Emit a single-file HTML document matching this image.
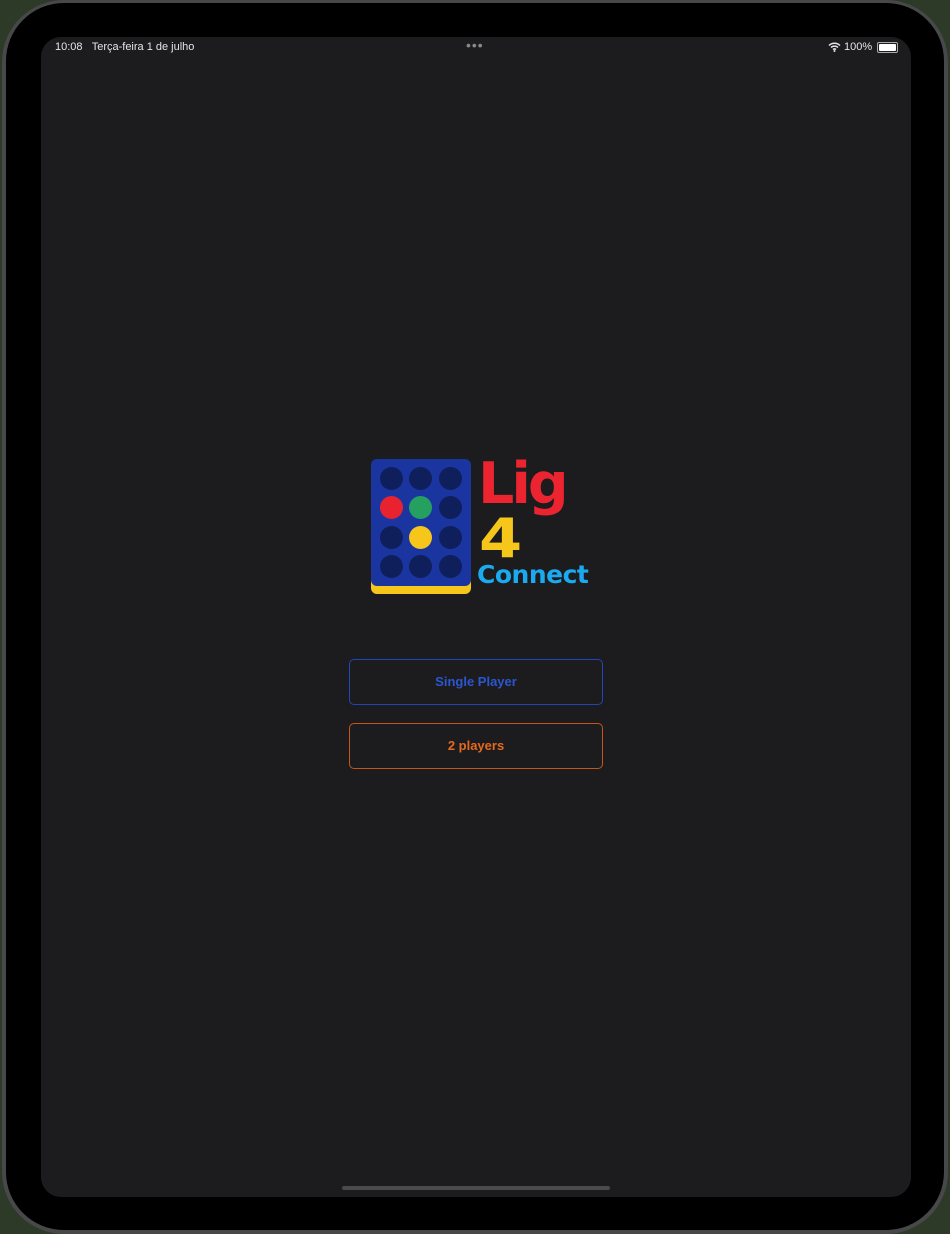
<!DOCTYPE html>
<html><head><meta charset="utf-8"><style>
body{margin:0;width:950px;height:1234px;background:#2d3a28;overflow:hidden;font-family:"Liberation Sans",sans-serif;position:relative}
.frame{position:absolute;left:2px;top:0;width:946px;height:1234px;border-radius:62px;background:#48484a}
.bezel{position:absolute;left:6px;top:3px;width:938px;height:1227px;border-radius:58px;background:#000}
.screen{position:absolute;left:41px;top:37px;width:870px;height:1160px;border-radius:20px;background:#1c1c1e}
.st{position:absolute;top:41px;font-size:11px;color:#e5e5e7}
.btn{position:absolute;left:349px;width:252px;height:44px;border:1px solid;border-radius:5px;box-sizing:content-box;text-align:center;line-height:44px;font-size:13px;font-weight:bold}
.c{position:absolute;width:23px;height:23px;border-radius:50%;background:#0f1f5c}
.t{position:absolute;font-weight:bold;font-family:"DejaVu Sans","Liberation Sans",sans-serif}
</style></head><body>
<div class="frame"></div><div class="bezel"></div>
<div class="screen"></div>
<div class="st" style="left:55px">10:08&nbsp;&nbsp;&nbsp;Terça-feira 1 de julho</div>
<div class="st" style="left:466px;top:37px;font-size:14px;letter-spacing:1px;color:#888">•••</div>
<svg style="position:absolute;left:828px;top:42px" width="13" height="10" viewBox="0 0 13 10"><path d="M1 3.5A8 8 0 0 1 12 3.5M3 5.5A5 5 0 0 1 10 5.5M5 7.5A2.5 2.5 0 0 1 8 7.5" stroke="#e5e5e7" stroke-width="1.5" fill="none"/><circle cx="6.5" cy="9" r="1" fill="#e5e5e7"/></svg>
<div class="st" style="left:844px">100%</div>
<div style="position:absolute;left:877px;top:42px;width:17px;height:7px;border:1px solid #aaa;border-radius:2px;padding:1px;box-sizing:content-box"><div style="width:17px;height:7px;background:#fff;border-radius:1px"></div></div>
<div style="position:absolute;left:897px;top:45px;width:1px;height:3px;background:#aaa"></div>

<div style="position:absolute;left:371px;top:466px;width:100px;height:128px;border-radius:6px;background:#f6c71a"></div>
<div style="position:absolute;left:371px;top:459px;width:100px;height:127px;border-radius:6px;background:#1a35a0"></div>
<div class="c" style="left:380px;top:467px"></div><div class="c" style="left:409px;top:467px"></div><div class="c" style="left:439px;top:467px"></div>
<div class="c" style="left:380px;top:496px;background:#e8232f"></div><div class="c" style="left:409px;top:496px;background:#26a060"></div><div class="c" style="left:439px;top:496px"></div>
<div class="c" style="left:380px;top:526px"></div><div class="c" style="left:409px;top:526px;background:#f6c71a"></div><div class="c" style="left:439px;top:526px"></div>
<div class="c" style="left:380px;top:555px"></div><div class="c" style="left:409px;top:555px"></div><div class="c" style="left:439px;top:555px"></div>
<div class="t" style="left:478px;top:451px;font-size:57px;color:#ec2430;letter-spacing:-3px;line-height:66px">Lig</div>
<div class="t" style="left:479px;top:509px;font-size:54px;color:#f6c71a;line-height:60px;transform:scaleX(1.15);transform-origin:left">4</div>
<div class="t" style="left:477px;top:560px;font-size:25px;color:#1ba9f0;letter-spacing:-0.5px;line-height:30px">Connect</div>

<div class="btn" style="top:659px;border-color:#2245b8;color:#2c55d0">Single Player</div>
<div class="btn" style="top:723px;border-color:#c4561a;color:#e5681e">2 players</div>
<div style="position:absolute;left:342px;top:1186px;width:268px;height:4px;border-radius:2px;background:#4a4a4c"></div>
</body></html>
